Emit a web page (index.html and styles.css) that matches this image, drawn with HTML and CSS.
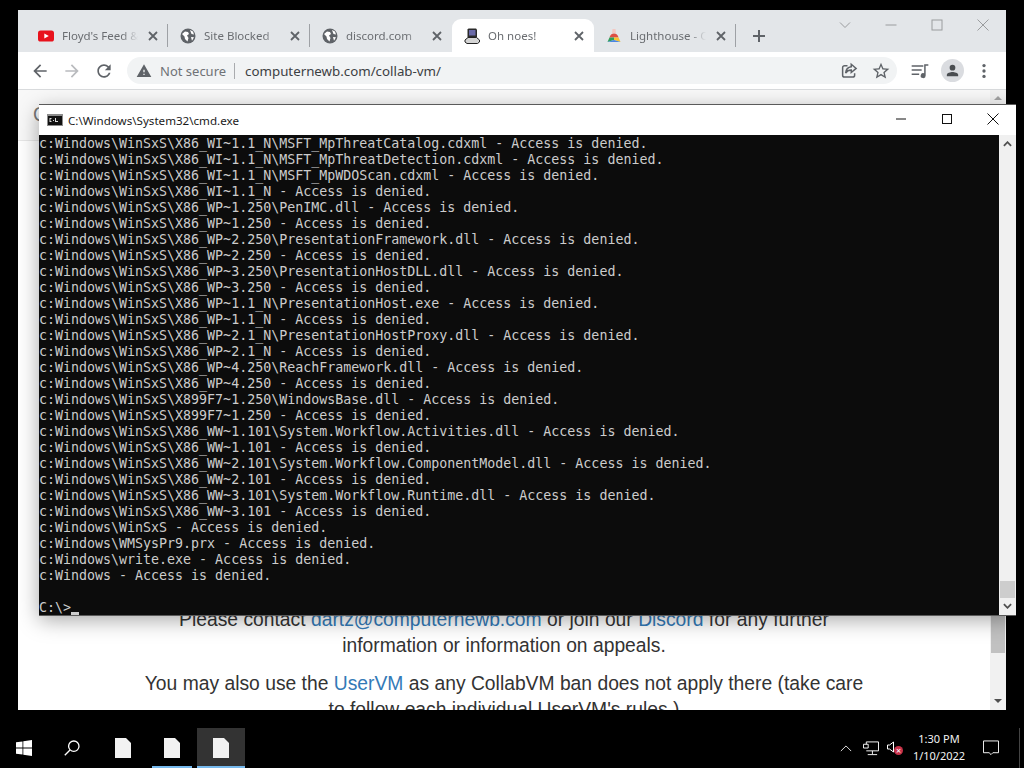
FILE: index.html
```html
<!DOCTYPE html>
<html lang="en">
<head>
<meta charset="utf-8">
<title>Oh noes!</title>
<link rel="stylesheet" href="styles.css">
</head>
<body>
<div class="desktop">
  <section class="browser">
    <div class="tabstrip">
      <div class="tab">
        <svg class="favicon" viewBox="0 0 16 16"><rect x="0" y="2.5" width="16" height="11" rx="2.6" fill="#e8121c"/><path d="M6.3 5.4v5.2L10.8 8z" fill="#fff"/></svg>
        <span class="tab-title">Floyd's Feed &amp; Floyd</span>
        <svg class="tab-close" viewBox="0 0 10 10"><path d="M1 1l8 8M9 1l-8 8"/></svg>
      </div>
      <div class="tab">
        <svg class="favicon" viewBox="0 0 16 16"><circle cx="8" cy="8" r="7.5" fill="#5f6368"/><path d="M2 6l3-2.5 3 .5 1 2-2 1.500 1.500 2.500-1 3.500L5 11 4.500 8.500zM10 2l3 1.500 1 3-2.500-.5zM11 9l3 .2-2 3.600z" fill="#fff"/></svg>
        <span class="tab-title">Site Blocked</span>
        <svg class="tab-close" viewBox="0 0 10 10"><path d="M1 1l8 8M9 1l-8 8"/></svg>
      </div>
      <div class="tab">
        <svg class="favicon" viewBox="0 0 16 16"><circle cx="8" cy="8" r="7.5" fill="#5f6368"/><path d="M2 6l3-2.5 3 .5 1 2-2 1.500 1.500 2.500-1 3.500L5 11 4.500 8.500zM10 2l3 1.500 1 3-2.500-.5zM11 9l3 .2-2 3.600z" fill="#fff"/></svg>
        <span class="tab-title">discord.com</span>
        <svg class="tab-close" viewBox="0 0 10 10"><path d="M1 1l8 8M9 1l-8 8"/></svg>
      </div>
      <div class="tab tab-active">
        <svg class="favicon" viewBox="0 0 16 16"><path d="M4.500.5h7.500l1 1v7.500l-1 1H4.500l-1-1V1.500z" fill="#2a2a2a"/><rect x="5" y="2" width="6.500" height="5.500" fill="#6a6aa8"/><path d="M1 12l3-2.500h8.500l3 2.500v2l-2 1.500H3L1 14z" fill="#d4d4d4" stroke="#222"/></svg>
        <span class="tab-title">Oh noes!</span>
        <svg class="tab-close" viewBox="0 0 10 10"><path d="M1 1l8 8M9 1l-8 8"/></svg>
      </div>
      <div class="tab tab-last">
        <svg class="favicon" viewBox="0 0 16 16"><path d="M6.500 1h3l.5 4h-4z" fill="#f3c9c3"/><path d="M3.500 9.500Q4.500 5.500 8 5.500t4.500 4z" fill="#dd4f43"/><path d="M1.500 14L3.500 9.500H8V12z" fill="#2f9e5a"/><path d="M8 9.500h4.500l2 4.500L8 12z" fill="#f6c333"/><path d="M1.500 14L8 12l6.500 2z" fill="#4a86e0"/></svg>
        <span class="tab-title">Lighthouse - Chrome</span>
        <svg class="tab-close" viewBox="0 0 10 10"><path d="M1 1l8 8M9 1l-8 8"/></svg>
      </div>
      <svg class="new-tab" viewBox="0 0 14 14"><path d="M7 1v12M1 7h12"/></svg>
      <div class="win-controls">
        <svg viewBox="0 0 12 12"><path d="M1 3.500l5 5 5-5"/></svg>
        <svg viewBox="0 0 12 12"><path d="M.5 6h11"/></svg>
        <svg viewBox="0 0 12 12"><rect x="1" y="1" width="10" height="10"/></svg>
        <svg viewBox="0 0 12 12"><path d="M.5.500l11 11M11.500.500l-11 11"/></svg>
      </div>
    </div>
    <div class="toolbar">
      <div class="tool"><svg viewBox="0 0 24 24"><path d="M20 11H7.830l5.590-5.590L12 4l-8 8 8 8 1.410-1.410L7.830 13H20v-2z"/></svg></div>
      <div class="tool tool-off"><svg viewBox="0 0 24 24"><path d="M4 11h12.170l-5.590-5.590L12 4l8 8-8 8-1.410-1.410L16.170 13H4v-2z"/></svg></div>
      <div class="tool"><svg viewBox="0 0 24 24"><path d="M17.650 6.350C16.200 4.900 14.210 4 12 4c-4.420 0-7.990 3.580-7.990 8s3.570 8 7.990 8c3.730 0 6.840-2.550 7.730-6h-2.080c-.82 2.330-3.040 4-5.650 4-3.310 0-6-2.690-6-6s2.690-6 6-6c1.660 0 3.140.69 4.220 1.780L13 11h7V4l-2.350 2.350z"/></svg></div>
      <div class="omnibox">
        <svg class="warn" viewBox="0 0 24 24"><path d="M1 21h22L12 2 1 21zm12-3h-2v-2h2v2zm0-4h-2v-4h2v4z"/></svg>
        <span class="not-secure">Not secure</span>
        <span class="omni-sep"></span>
        <span class="url">computernewb.com/collab-vm/</span>
        <div class="tool omni-first"><svg class="outline" viewBox="0 0 24 24"><path d="M10 5H6a2.500 2.500 0 0 0-2.500 2.500v10A2.500 2.500 0 0 0 6 20h11a2.500 2.500 0 0 0 2.500-2.500V15"/><path d="M15 3l6.500 5.500L15 14v-3.200c-3.500 0-5.800 1.200-7.500 4 .4-4.800 3-8 7.500-8.500z"/></svg></div>
        <div class="tool"><svg viewBox="0 0 24 24"><path d="M22 9.240l-7.190-.62L12 2 9.190 8.630 2 9.240l5.460 4.730L5.820 21 12 17.270 18.180 21l-1.630-7.030L22 9.240zM12 15.400l-3.760 2.270 1-4.280-3.320-2.880 4.380-.38L12 6.100l1.710 4.040 4.380.38-3.320 2.880 1 4.280L12 15.400z"/></svg></div>
      </div>
      <div class="tool"><svg viewBox="0 0 24 24"><path d="M2 5h14v1.800H2zM2 10h12v1.800H2zM2 15h9v1.800H2zM17 4h5v1.800h-3.200V17.500a3 3 0 1 1-1.800-2.700z"/></svg></div>
      <div class="tool"><span class="avatar"><svg viewBox="0 0 24 24"><circle cx="12" cy="8" r="4"/><path d="M4 20v-2c0-2.700 5.300-4 8-4s8 1.300 8 4v2z"/></svg></span></div>
      <div class="tool"><svg viewBox="0 0 24 24"><circle cx="12" cy="5.500" r="2"/><circle cx="12" cy="12" r="2"/><circle cx="12" cy="18.500" r="2"/></svg></div>
    </div>
    <div class="viewport">
      <div class="page">
        <nav class="navbar"><a class="brand">CollabVM</a></nav>
        <main class="page-body">
          <p>Please contact <a>dartz@computernewb.com</a> or join our <a>Discord</a> for any further<br>information or information on appeals.</p>
          <p>You may also use the <a>UserVM</a> as any CollabVM ban does not apply there (take care<br>to follow each individual UserVM's rules.)</p>
        </main>
      </div>
      <div class="page-scroll">
        <span class="arrow-up"></span>
        <div class="page-thumb"></div>
        <span class="arrow-down"></span>
      </div>
    </div>
  </section>

  <section class="cmd">
    <header class="cmd-title">
      <svg class="cmd-icon" viewBox="0 0 16 12"><rect width="16" height="12" fill="#8c8c8c"/><rect x="1" y="2" width="14" height="9" fill="#111"/><path d="M2.500 4h2v1h-2zM2.500 4h1v4h-1zM2.500 7h2v1h-2zM6 6h1v1H6zM8 4h1v4H8zM9 7h2v1H9z" fill="#ddd"/></svg>
      <span class="cmd-name">C:\Windows\System32\cmd.exe</span>
      <div class="cmd-controls">
        <svg viewBox="0 0 12 12"><path d="M1 6h10"/></svg>
        <svg viewBox="0 0 12 12"><rect x="1.500" y="1.500" width="9" height="9"/></svg>
        <svg viewBox="0 0 12 12"><path d="M.5.500l11 11M11.500.500l-11 11"/></svg>
      </div>
    </header>
    <div class="cmd-main">
<pre class="console">c:Windows\WinSxS\X86_WI~1.1_N\MSFT_MpThreatCatalog.cdxml - Access is denied.
c:Windows\WinSxS\X86_WI~1.1_N\MSFT_MpThreatDetection.cdxml - Access is denied.
c:Windows\WinSxS\X86_WI~1.1_N\MSFT_MpWDOScan.cdxml - Access is denied.
c:Windows\WinSxS\X86_WI~1.1_N - Access is denied.
c:Windows\WinSxS\X86_WP~1.250\PenIMC.dll - Access is denied.
c:Windows\WinSxS\X86_WP~1.250 - Access is denied.
c:Windows\WinSxS\X86_WP~2.250\PresentationFramework.dll - Access is denied.
c:Windows\WinSxS\X86_WP~2.250 - Access is denied.
c:Windows\WinSxS\X86_WP~3.250\PresentationHostDLL.dll - Access is denied.
c:Windows\WinSxS\X86_WP~3.250 - Access is denied.
c:Windows\WinSxS\X86_WP~1.1_N\PresentationHost.exe - Access is denied.
c:Windows\WinSxS\X86_WP~1.1_N - Access is denied.
c:Windows\WinSxS\X86_WP~2.1_N\PresentationHostProxy.dll - Access is denied.
c:Windows\WinSxS\X86_WP~2.1_N - Access is denied.
c:Windows\WinSxS\X86_WP~4.250\ReachFramework.dll - Access is denied.
c:Windows\WinSxS\X86_WP~4.250 - Access is denied.
c:Windows\WinSxS\X899F7~1.250\WindowsBase.dll - Access is denied.
c:Windows\WinSxS\X899F7~1.250 - Access is denied.
c:Windows\WinSxS\X86_WW~1.101\System.Workflow.Activities.dll - Access is denied.
c:Windows\WinSxS\X86_WW~1.101 - Access is denied.
c:Windows\WinSxS\X86_WW~2.101\System.Workflow.ComponentModel.dll - Access is denied.
c:Windows\WinSxS\X86_WW~2.101 - Access is denied.
c:Windows\WinSxS\X86_WW~3.101\System.Workflow.Runtime.dll - Access is denied.
c:Windows\WinSxS\X86_WW~3.101 - Access is denied.
c:Windows\WinSxS - Access is denied.
c:Windows\WMSysPr9.prx - Access is denied.
c:Windows\write.exe - Access is denied.
c:Windows - Access is denied.

C:\&gt;<span class="cursor"></span></pre>
      <div class="cmd-scroll">
        <svg viewBox="0 0 10 6"><path d="M1 5l4-4 4 4"/></svg>
        <div class="cmd-thumb"></div>
        <svg viewBox="0 0 10 6"><path d="M1 1l4 4 4-4"/></svg>
      </div>
    </div>
  </section>
</div>

<footer class="taskbar">
  <div class="task start"><svg viewBox="0 0 16 16"><path d="M0 2.300l6.500-.9v6.200H0zM7.300 1.300L16 0v7.600H7.300zM0 8.400h6.500v6.200L0 13.700zM7.300 8.400H16V16l-8.700-1.200z"/></svg></div>
  <div class="task search"><svg viewBox="0 0 16 16"><circle cx="9.800" cy="6.200" r="5.200"/><path d="M6 10L.8 15.300"/></svg></div>
  <div class="task file first-file"><svg viewBox="0 0 16 20"><path d="M0 0h11l5 5v15H0z"/></svg></div>
  <div class="task file running"><svg viewBox="0 0 16 20"><path d="M0 0h11l5 5v15H0z"/></svg></div>
  <div class="task file active"><svg viewBox="0 0 16 20"><path d="M0 0h11l5 5v15H0z"/></svg></div>
  <div class="tray">
    <svg class="tray-chevron" viewBox="0 0 14 8"><path d="M1 7l6-6 6 6"/></svg>
    <svg class="tray-net" viewBox="0 0 17 15"><path d="M3.500 3V.5h13v9.500H3.500M.5 3h5v4h-5zM10 10v3.500M5 14h10"/></svg>
    <div class="tray-vol">
      <svg viewBox="0 0 8 12"><path d="M.5 4v4h2L6.500 11V1L2.500 4z"/></svg>
      <span class="mute">×</span>
    </div>
    <div class="clock"><span>1:30 PM</span><span>1/10/2022</span></div>
    <svg class="tray-note" viewBox="0 0 17 16"><path d="M.5.500h16v12.500h-6L8.500 15l-2-2h-6z"/></svg>
    <div class="show-desktop"></div>
  </div>
</footer>
</body>
</html>
```

FILE: styles.css
```css
* { box-sizing: border-box; }
html, body { margin: 0; height: 100%; }
body {
  width: 1024px;
  height: 768px;
  background: #000;
  overflow: hidden;
  display: flex;
  flex-direction: column;
  font-family: "Noto Sans", sans-serif;
}
svg { display: block; }

.desktop { position: relative; flex: 0 0 728px; }

/* browser window */
.browser {
  position: absolute;
  left: 18px;
  top: 10px;
  width: 988px;
  height: 700px;
  display: flex;
  flex-direction: column;
  background: #fff;
}
.tabstrip {
  height: 42px;
  background: #e3e6e9;
  display: flex;
  align-items: flex-end;
  padding-left: 8px;
  flex: none;
}
.tab {
  width: 142px;
  height: 33px;
  display: flex;
  align-items: center;
  padding-left: 12px;
  position: relative;
  border-right: 1px solid #9ea1a5;
  background-clip: padding-box;
  border-image: linear-gradient(#e3e6e9 6px, #9ea1a5 6px, #9ea1a5 27px, #e3e6e9 27px) 1;
}
.tab-active {
  background: #fff;
  border: 0;
  border-radius: 9px 9px 0 0;
}
.tab:nth-child(3) { border-right: 0; }
.favicon { width: 16px; height: 16px; flex: none; }
.tab-title {
  width: 76px;
  margin-left: 8px;
  font-family: "Noto Sans", sans-serif;
  font-size: 11.5px;
  color: #6a6d71;
  white-space: nowrap;
  overflow: hidden;
  -webkit-mask-image: linear-gradient(90deg, #000 60px, transparent 76px);
  mask-image: linear-gradient(90deg, #000 60px, transparent 76px);
}
.tab-close {
  width: 10px;
  height: 10px;
  margin-left: 10px;
  fill: none;
  stroke: #5f6368;
  stroke-width: 1.8;
}
.new-tab {
  width: 14px;
  height: 14px;
  margin: 0 0 9px 16px;
  fill: none;
  stroke: #5f6368;
  stroke-width: 2;
}
.win-controls {
  margin-left: auto;
  align-self: flex-start;
  display: flex;
  gap: 34px;
  padding: 9px 17px 0 0;
}
.win-controls svg {
  width: 12px;
  height: 12px;
  fill: none;
  stroke: #9a9c9e;
  stroke-width: 1;
}

/* toolbar */
.toolbar {
  height: 37px;
  flex: none;
  display: flex;
  align-items: center;
  padding: 0 6px;
  background: #fff;
}
.tool {
  width: 32px;
  height: 27px;
  flex: none;
  display: flex;
  align-items: center;
  justify-content: center;
}
.tool svg { width: 20px; height: 20px; fill: #5f6368; }
.tool-off svg { fill: #b9bbbe; }
.tool svg.outline { width: 18px; height: 18px; fill: none; stroke: #5f6368; stroke-width: 2; }
.omnibox {
  flex: 1;
  height: 27px;
  margin: 0 7px;
  background: #f1f3f4;
  border-radius: 14px;
  display: flex;
  align-items: center;
  padding-left: 9px;
  white-space: nowrap;
}
.warn { width: 16px; height: 16px; fill: #5f6368; flex: none; }
.not-secure { margin-left: 8px; color: #6f7276; font-size: 13px; }
.omni-sep { width: 1px; height: 16px; background: #a9abae; margin: 0 10px 0 8px; }
.url { color: #3c4043; font-size: 13.3px; }
.omni-first { margin-left: auto; }
.avatar {
  width: 23px;
  height: 23px;
  border-radius: 50%;
  background: #dadce0;
  display: flex;
  align-items: center;
  justify-content: center;
}
.avatar svg { width: 17px; height: 17px; fill: #4a4d51; }

/* page in the browser */
.viewport {
  flex: 1;
  min-height: 0;
  display: flex;
  border-top: 1px solid #d9dbdd;
}
.page {
  flex: 1;
  min-width: 0;
  overflow: hidden;
  font-family: "Liberation Sans", Arial, sans-serif;
  font-size: 19.3px;
  line-height: 26px;
  color: #333;
}
.navbar {
  height: 51px;
  background: #f8f8f8;
  border-bottom: 1px solid #e7e7e7;
  padding: 12px 15px;
}
.brand { color: #777; }
.page-body { padding-top: 466px; text-align: center; }
.page-body p { margin: 0 0 12px; white-space: nowrap; }
.page-body a { color: #337ab7; }
.page-scroll {
  width: 16px;
  flex: none;
  background: #f1f1f1;
  position: relative;
  display: flex;
  flex-direction: column;
  align-items: center;
}
.page-thumb {
  position: absolute;
  left: 1px;
  right: 1px;
  top: 20px;
  height: 543px;
  background: #c1c1c1;
}
.arrow-up, .arrow-down {
  position: absolute;
  left: 4px;
  width: 0;
  height: 0;
  border-left: 4px solid transparent;
  border-right: 4px solid transparent;
}
.arrow-up { top: 6px; border-bottom: 4px solid #a3a3a3; }
.arrow-down { bottom: 7px; border-top: 4px solid #505050; }

/* command prompt */
.cmd {
  position: absolute;
  left: 39px;
  top: 105px;
  width: 977px;
  height: 510px;
  display: flex;
  flex-direction: column;
  background: #fff;
  box-shadow: 0 1px 0 #5a5a5a, 0 -1px 0 #5a5a5a, 0 5px 20px rgba(0, 0, 0, .35);
}
.cmd-title {
  height: 30px;
  flex: none;
  display: flex;
  align-items: center;
  padding: 0 0 0 8px;
  background: #fff;
}
.cmd-icon { width: 16px; height: 12px; flex: none; }
.cmd-name { margin-left: 5px; font-size: 11.6px; color: #1a1a1a; }
.cmd-controls {
  margin-left: auto;
  display: flex;
  gap: 34px;
  padding: 0 17px 2px 0;
}
.cmd-controls svg {
  width: 12px;
  height: 12px;
  fill: none;
  stroke: #111;
  stroke-width: 1;
}
.cmd-main { flex: 1; min-height: 0; display: flex; }
.console {
  flex: 1;
  margin: 0;
  padding-top: 1px;
  background: #0c0c0c;
  color: #ccc;
  font-family: "DejaVu Sans Mono", monospace;
  font-size: 13.3px;
  line-height: 16px;
  overflow: hidden;
}
.cursor {
  display: inline-block;
  width: 8px;
  height: 3px;
  background: #ccc;
  vertical-align: -3px;
}
.cmd-scroll {
  width: 17px;
  flex: none;
  background: #f0f0f0;
  display: flex;
  flex-direction: column;
  align-items: center;
  padding: 6px 0;
}
.cmd-scroll svg {
  width: 9px;
  height: 6px;
  fill: none;
  stroke: #505050;
  stroke-width: 2;
}
.cmd-thumb {
  width: 15px;
  height: 17px;
  background: #cdcdcd;
  margin: auto 0 5px;
}

/* taskbar */
.taskbar {
  height: 40px;
  flex: none;
  background: #000;
  display: flex;
  align-items: stretch;
  color: #fff;
}
.task {
  width: 48px;
  display: flex;
  align-items: center;
  justify-content: center;
  position: relative;
}
.start svg { width: 16px; height: 16px; fill: #fff; }
.search svg { width: 16px; height: 16px; fill: none; stroke: #fff; stroke-width: 1.300; }
.file { width: 49px; }
.first-file { margin-left: 2px; }
.file svg { width: 16px; height: 20px; fill: #f2f2f2; }
.running::after, .active::after {
  content: "";
  position: absolute;
  left: 5px;
  right: 4px;
  bottom: 0;
  height: 2px;
  background: #76b9ed;
}
.active { background: #333; width: 48px; margin-left: 1px; }
.active::after { left: 0; right: 0; }
.tray {
  margin-left: auto;
  display: flex;
  align-items: center;
}
.tray-chevron { width: 12px; height: 7px; fill: none; stroke: #fff; stroke-width: 1; margin-right: 11px; }
.tray-net { width: 16px; height: 15px; fill: none; stroke: #fff; stroke-width: 1; margin-right: 8px; }
.tray-vol { width: 16px; height: 14px; position: relative; }
.tray-vol svg { width: 8px; height: 12px; fill: none; stroke: #fff; stroke-width: 1; }
.mute {
  position: absolute;
  left: 7px;
  top: 5px;
  width: 9px;
  height: 9px;
  border-radius: 50%;
  background: #c8324a;
  font-size: 9px;
  line-height: 9px;
  text-align: center;
  color: #fff;
}
.clock {
  width: 68px;
  margin-left: 2px;
  padding-bottom: 2px;
  display: flex;
  flex-direction: column;
  align-items: center;
  font-size: 11px;
  line-height: 17px;
  color: #f2f2f2;
}
.tray-note { width: 16px; height: 16px; fill: none; stroke: #fff; stroke-width: 1; margin: 0 20px 0 10px; }
.show-desktop { width: 5px; height: 40px; border-left: 1px solid #444; }
```
